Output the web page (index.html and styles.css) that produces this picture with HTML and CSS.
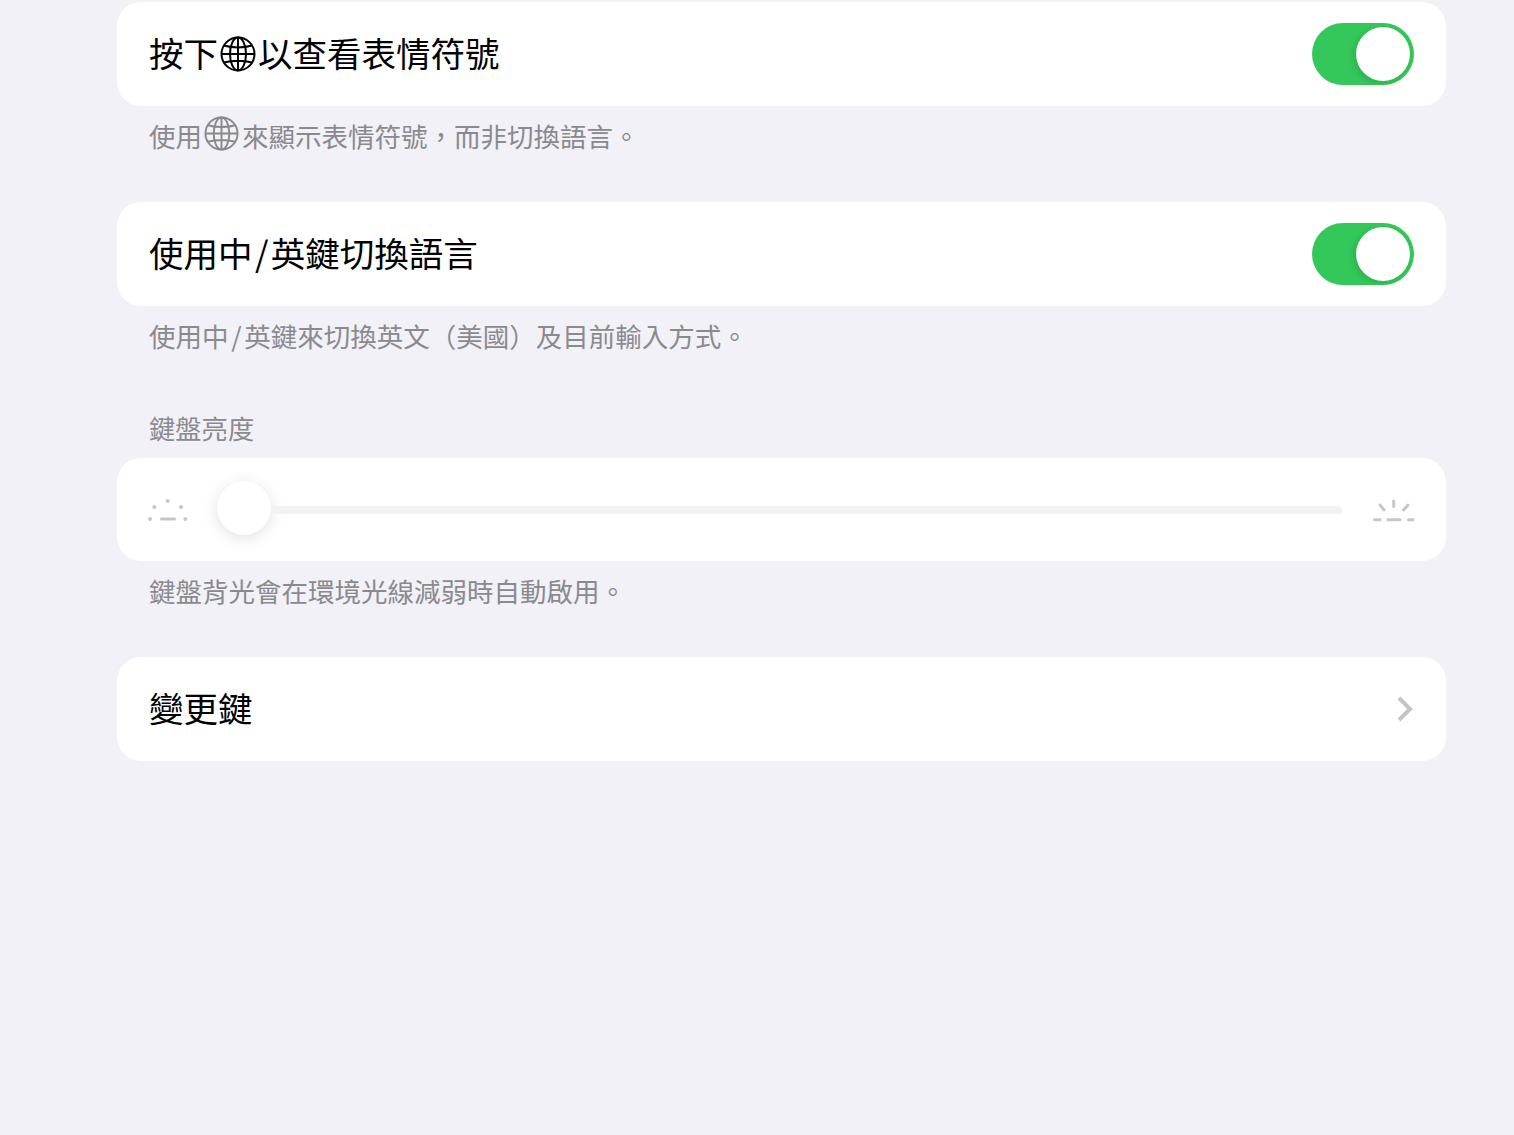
FILE: index.html
```html
<!DOCTYPE html>
<html lang="zh-Hant">
<head>
    <meta charset="UTF-8" />
    <title>鍵盤設定</title>
    <link rel="stylesheet" href="styles.css">
</head>
<body>
    <svg class="defs" width="0" height="0" aria-hidden="true">
        <symbol id="globe" viewBox="0 0 36 36">
            <g fill="none" stroke="currentColor" stroke-width="2">
                <circle cx="18" cy="18" r="16.5"/>
                <ellipse cx="18" cy="18" rx="8" ry="16.5"/>
                <path d="M18 1.5V34.500M1.500 18H34.500M4 9.500C12 12 24 12 32 9.500M4 26.500C12 24 24 24 32 26.500"/>
            </g>
        </symbol>
    </svg>
    <main class="page">
        <div class="card">
            <div class="label">按下<svg class="globe"><use href="#globe"/></svg>以查看表情符號</div>
            <div class="toggle"><span class="knob"></span></div>
        </div>
        <p class="note">使用<svg class="globe globe-note"><use href="#globe"/></svg>來顯示表情符號，而非切換語言。</p>

        <div class="card">
            <div class="label">使用中<span class="slash slash-label">/</span>英鍵切換語言</div>
            <div class="toggle"><span class="knob"></span></div>
        </div>
        <p class="note">使用中<span class="slash">/</span>英鍵來切換英文（美國）及目前輸入方式。</p>

        <h2 class="section-title">鍵盤亮度</h2>
        <div class="card card-slider">
            <svg class="sun" width="42" height="26" viewBox="0 0 42 26">
                <g fill="#c7c7c9">
                    <circle cx="19.700" cy="4" r="2"/>
                    <circle cx="6.300" cy="10" r="2"/>
                    <circle cx="33" cy="10" r="2"/>
                    <circle cx="2" cy="22" r="2"/>
                    <circle cx="37.300" cy="22" r="2"/>
                    <rect x="12" y="20.500" width="16" height="3" rx="1.500"/>
                </g>
            </svg>
            <div class="slider">
                <span class="slider-knob"></span>
                <span class="slider-track"></span>
            </div>
            <svg class="sun" width="42" height="26" viewBox="0 0 42 26">
                <g stroke="#c7c7c9" stroke-width="3" stroke-linecap="round">
                    <path d="M20.700 4V9.500M7 8L11 13M35 8L30.500 13M1.500 22.800H7M15 22.800H27M35.500 22.800H40"/>
                </g>
            </svg>
        </div>
        <p class="note">鍵盤背光會在環境光線減弱時自動啟用。</p>

        <div class="card">
            <div class="label">變更鍵</div>
            <svg class="chevron" width="18" height="28" viewBox="0 0 18 28">
                <path d="M3 3L14 14L3 25" fill="none" stroke="#c4c4c7" stroke-width="4"/>
            </svg>
        </div>
    </main>
</body>
</html>
```

FILE: styles.css
```css
* {
    margin: 0;
    padding: 0;
    box-sizing: border-box;
}
body {
    min-height: 100vh;
    background-color: #f1f1f7;
    font-family: "Noto Sans CJK TC", "Liberation Sans", sans-serif;
}
.defs { position: absolute; }
.page { padding: 2px 68px 0 117px; }
.card {
    display: flex;
    align-items: center;
    justify-content: space-between;
    height: 104px;
    padding: 0 32px;
    background: #fff;
    border-radius: 24px;
}
.label {
    display: flex;
    align-items: center;
    padding-bottom: 4px;
    font-size: 34.500px;
    line-height: 44px;
    color: #000;
    white-space: pre;
}
.globe {
    width: 36px;
    height: 36px;
    margin: 3px 2px 0;
    flex: none;
}
.slash { margin: 0 0.1em; }
.slash-label { margin: 0 0.07em; }
.note {
    display: flex;
    align-items: center;
    height: 62px;
    margin-bottom: 34px;
    padding: 0 32px 4px;
    font-size: 26.500px;
    color: #8a8a8e;
    white-space: pre;
}
.globe-note {
    width: 35px;
    height: 35px;
    margin: 0 3px 3px 2px;
}
.toggle {
    display: flex;
    justify-content: flex-end;
    align-items: center;
    width: 102px;
    height: 62px;
    padding-right: 4px;
    background: #34c759;
    border-radius: 31px;
}
.knob {
    width: 54px;
    height: 54px;
    background: #fff;
    border-radius: 50%;
    box-shadow: -2px 2px 6px rgba(0, 0, 0, 0.12);
}
.section-title {
    height: 30px;
    margin-top: 45px;
    padding: 0 32px;
    font-size: 26.300px;
    font-weight: 400;
    line-height: 30px;
    color: #8a8a8e;
}
.card-slider {
    margin-top: 15px;
    height: 103px;
    padding: 0 31px;
}
.sun { flex: none; }
.slider {
    flex: 1;
    display: flex;
    align-items: center;
    margin: 0 31px 0 27px;
    padding-bottom: 3px;
}
.slider-knob {
    width: 54px;
    height: 54px;
    background: #fff;
    border-radius: 50%;
    box-shadow: 0 3px 16px rgba(0, 0, 0, 0.12);
    flex: none;
}
.slider-track {
    flex: 1;
    height: 8px;
    margin-top: 4px;
    background: #f2f2f2;
    border-radius: 0 4px 4px 0;
}
.chevron { flex: none; }
```
